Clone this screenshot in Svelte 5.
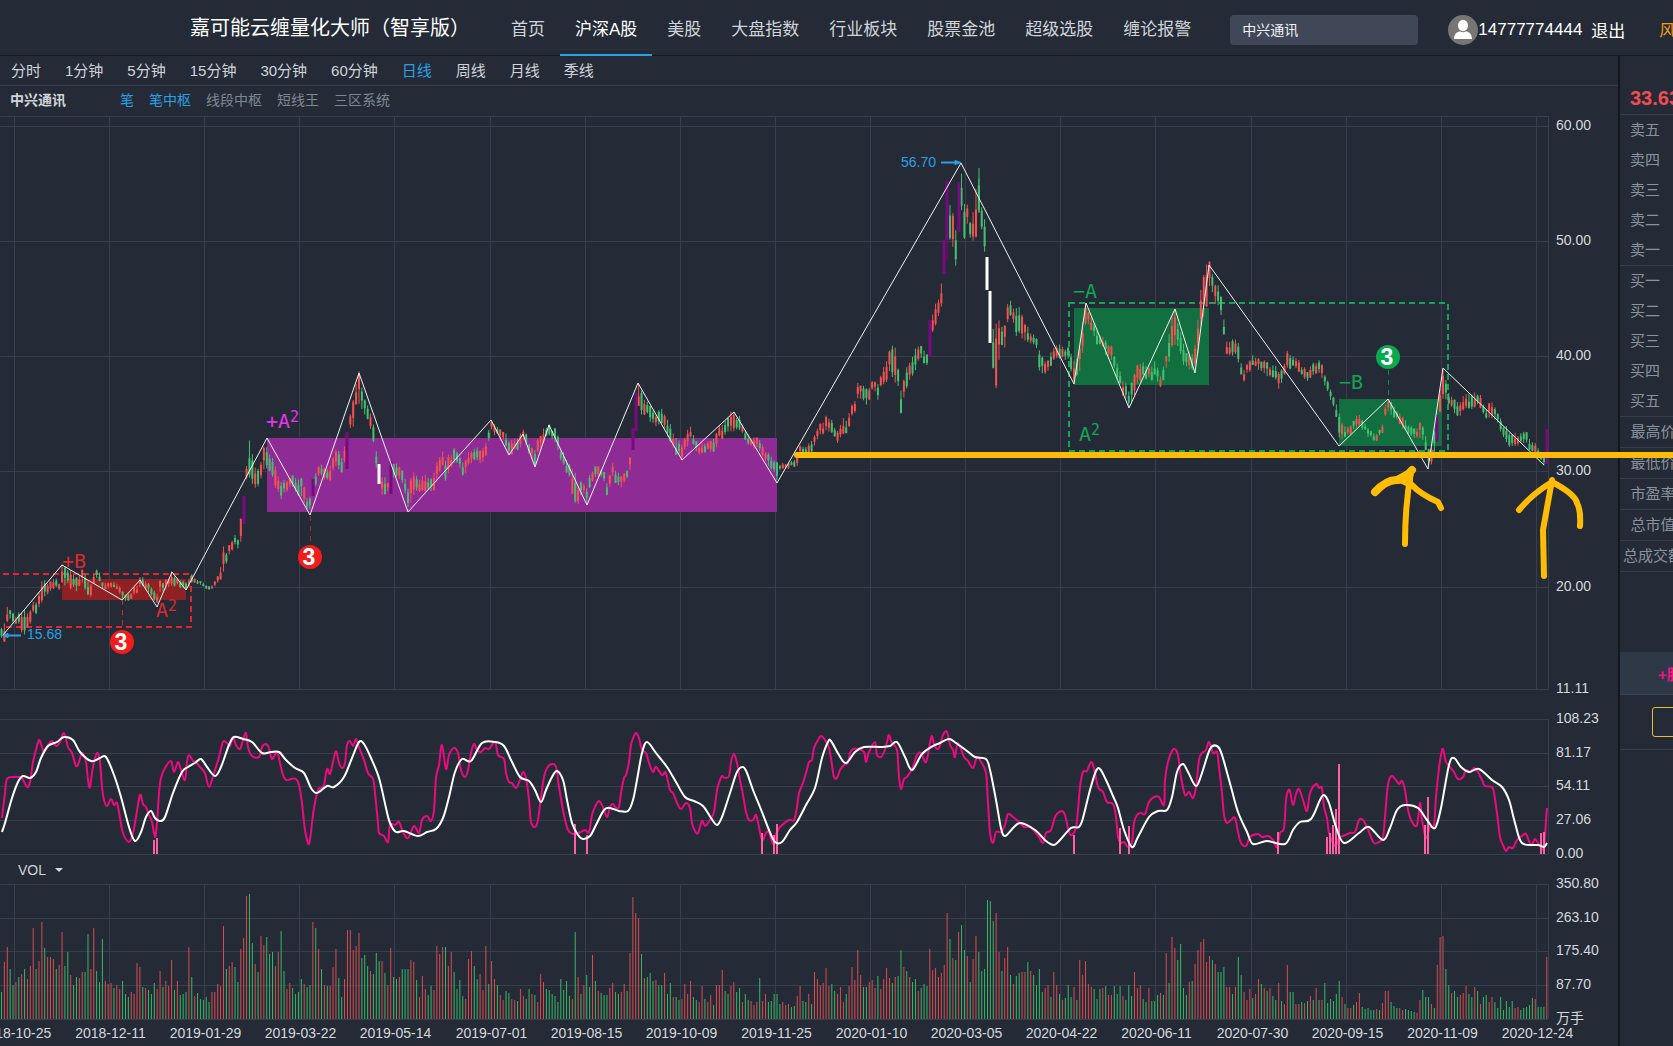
<script>
    const navItems = ['首页', '沪深A股', '美股', '大盘指数', '行业板块', '股票金池', '超级选股', '缠论报警'];
    const periods = ['分时', '1分钟', '5分钟', '15分钟', '30分钟', '60分钟', '日线', '周线', '月线', '季线'];
    const overlays = ['笔', '笔中枢', '线段中枢', '短线王', '三区系统'];
    const sells = ['卖五', '卖四', '卖三', '卖二', '卖一'];
    const buys = ['买一', '买二', '买三', '买四', '买五'];
    const stats = ['最高价', '最低价', '市盈率', '总市值', '总成交额'];

    let activeNav = '沪深A股';
    let activePeriod = '日线';
    let activeOverlays = ['笔', '笔中枢'];
    let keyword = '中兴通讯';
    let indicator = 'VOL';

    const dates = [
        '2018-10-25', '2018-12-11', '2019-01-29', '2019-03-22', '2019-05-14', '2019-07-01',
        '2019-08-15', '2019-10-09', '2019-11-25', '2020-01-10', '2020-03-05', '2020-04-22',
        '2020-06-11', '2020-07-30', '2020-09-15', '2020-11-09', '2020-12-24'
    ].map((label, i) => ({ label, x: 14.5 + Math.round(i * 95.12) }));

    const priceTicks = [['60.00', 126], ['50.00', 241], ['40.00', 356], ['30.00', 471], ['20.00', 587], ['11.11', 689]];
    const oscTicks = [['108.23', 29], ['81.17', 63], ['54.11', 96], ['27.06', 130], ['0.00', 164]];
    const volTicks = [['350.80', 4], ['263.10', 38], ['175.40', 71], ['87.70', 105], ['万手', 139]];

    const STEP = 2.883;

    // one entry per trading day, negative when the day closed down
    const volumes = [
        -27, 57, 72, -50, -34, 37, -42, 45, -50, 40, 53, 91, -50, 58, 97, -71, 62, 62, 60, -50,
        54, 87, -53, -67, 44, -34, -42, 41, 47, -47, -85, 50, 91, -48, -37, -80, 38, 35, 36, -31,
        34, 30, -38, -25, -22, 27, 25, 56, 52, -32, 31, -29, -25, -36, 30, 48, -32, 38, 33, 59,
        -29, 38, -24, -25, -27, 72, -42, 23, -26, -20, -19, -22, -17, 27, 27, 35, 33, 93, -50, 53,
        57, -52, -37, 70, 81, 123, -125, -76, 55, -47, 83, 74, -82, -65, -67, 53, 67, -88, -48, 30,
        36, -31, -25, -27, -40, 35, -32, -34, 97, -91, 70, -50, 34, -33, 33, 52, 70, -41, -22, 40,
        89, 89, 69, 73, 86, -61, -64, -53, 48, -45, -66, -58, 58, -46, 34, 71, -42, -40, 42, -50,
        -50, -50, 59, 57, -39, 22, 43, 30, -24, -33, 29, 73, 65, 72, -72, 53, 67, -47, -30, -39,
        -23, 20, 60, 68, -53, -40, 45, 29, 73, -35, 58, 40, -34, 24, 19, -28, -26, 20, 19, -18,
        30, 23, -20, -30, 25, -24, 17, 45, 37, -30, -29, -25, -23, -17, -40, -29, -38, -23, 20, -87,
        42, -25, 34, -44, -32, 64, -38, 28, -26, -24, -24, 31, 36, -27, -25, 27, 35, -28, 66, 122,
        106, 101, -65, 41, -42, -46, -38, 39, -34, -34, 46, -25, -36, 22, -22, -19, 20, 35, 25, 38,
        -22, -19, 17, 33, -20, 17, 24, -14, 34, 34, 49, -28, -25, 33, 37, -27, -31, 17, -25, -19,
        18, 14, 17, -41, 18, 25, -17, -18, -25, -25, -15, 17, 14, 15, -12, -13, 23, 33, -18, -17,
        25, -15, 47, 40, 34, 36, 51, 33, -35, -28, 25, 32, 17, -25, 33, 52, 39, 69, 44, -32,
        -32, 37, 39, 31, -43, 30, 40, 51, 41, -36, 42, -43, -69, 52, -48, 42, -37, -40, 28, -31,
        -35, -33, 70, 49, 51, 42, 46, 54, 106, -80, 61, -59, 87, -94, -69, 63, -37, 60, 83, -67,
        -48, -50, -119, -118, -98, 106, 67, -48, 61, 72, -44, 35, -43, -46, 47, 47, -57, 48, -44, -34,
        -50, -27, 31, 34, -22, 47, 34, -25, 19, -21, -34, -22, 32, -19, 59, 44, 58, 35, 32, -30,
        -20, -30, 31, -33, 24, 24, -33, -25, -33, 23, -19, -34, -23, 47, 31, 34, -20, -17, 31, -18,
        -18, -24, 26, -24, 66, -36, 82, 71, -59, -75, -31, -24, 37, -38, 55, 69, 77, 80, 57, 63,
        -59, 55, -47, -47, -52, 32, 32, -25, 32, -62, -44, 27, 19, 30, -21, 25, 40, -35, 31, -28,
        31, -23, -19, 36, -18, 15, 54, -27, -27, 15, 15, -17, 16, -18, 23, -19, 31, -19, 19, -36,
        -16, -20, -18, -25, -38, 22, -15, 11, 11, -14, 17, 26, -12, -10, -11, -9, -9, 10, -9, 16,
        28, 28, -17, -13, -11, 11, 9, -10, -9, -8, -7, 6, 19, -29, -22, -22, 15, -11, 54, 82,
        83, -50, -34, 26, -28, -22, 24, 26, 33, -25, -22, 32, -28, 15, -22, -24, 17, 22, -17, -11,
        -22, -9, -18, -12, -18, 11, 12, -9, -11, -12, -14, -21, 20, -12, -12, -12, 62
    ];

    const parse = (text) => text.trim().split(/\s+/).map((p) => p.split(',').map(Number));

    // x, middle of the day's range, length of the range
    const pricePath = parse(`
        0,635,4 4,633,18 7,615,16 11,616,10 15,621,8 19,617,12 24,625,22 30,618,12 33,608,10 38,605,12
        42,590,18 48,588,12 54,583,10 59,586,8 62,575,20 68,575,16 72,580,16 78,584,12 84,576,12 88,590,18
        92,590,14 95,572,8 99,574,8 103,588,8 110,584,6 115,584,6 120,590,8 125,597,8 131,595,8 137,588,10
        142,581,8 148,587,8 154,594,10 157,600,12 160,588,12 167,584,8 172,580,14 178,583,8 184,586,8 188,583,12
        192,578,8 200,583,4 208,588,4 214,586,4 220,575,10 223,562,24 228,553,7 235,538,13 240,545,10 241,528,24
        247,470,12 250,458,46 254,475,20 260,475,14 264,457,22 270,465,16 275,475,18 282,490,17 290,480,12 298,485,14
        305,495,18 309,508,14 313,490,10 318,470,12 325,474,10 331,473,14 335,455,22 340,465,14 344,460,14 350,425,16
        354,410,28 357,392,30 359,385,34 363,400,22 367,412,16 370,418,18 373,430,14 376,455,22 382,488,20 388,485,10
        395,470,16 400,475,16 405,485,18 408,495,26 413,485,22 420,485,16 427,480,14 432,485,14 437,470,20 442,460,16
        446,470,20 453,455,14 458,460,12 464,472,14 470,455,14 478,455,12 484,455,12 488,442,14 491,425,10 496,430,10
        503,436,10 508,445,14 514,447,12 520,440,12 524,435,10 528,445,12 534,458,14 540,440,16 548,430,10 556,438,12
        562,457,14 568,470,12 574,482,30 578,495,16 583,485,10 587,495,18 592,475,14 598,470,10 604,475,8 607,490,10
        612,470,16 618,478,12 623,482,10 627,474,10 630,465,16 639,395,24 643,406,20 650,412,14 655,420,14 660,418,14
        665,420,12 670,432,20 676,445,16 682,455,14 688,435,14 692,434,14 698,448,10 706,447,10 714,445,12 720,430,16
        726,430,14 733,420,18 738,422,14 745,433,10 752,445,10 758,443,12 765,455,12 772,462,14 777,474,18 780,467,5
        786,466,5 792,464,6 797,460,14 800,450,8 806,450,8 812,447,12 818,432,12 825,424,16 832,425,12 836,438,12
        842,427,14 848,425,12 852,410,14 855,404,14 858,388,16 862,395,16 868,395,14 873,382,12 878,390,14 884,376,16
        890,362,24 895,365,30 899,378,20 901,402,20 905,385,20 910,370,20 916,355,18 922,352,12 928,360,12 932,322,18
        938,310,20 942,292,26 949,217,34 953,230,38 956,248,30 961,185,44 964,225,44 967,210,24 971,234,20 975,220,50
        978,192,46 983,225,24 985,235,34 993,350,34 996,355,56 1000,338,26 1004,340,26 1008,308,18 1012,312,14 1016,325,26
        1020,320,24 1025,335,20 1032,338,12 1036,340,12 1040,362,18 1045,366,12 1050,362,12 1055,352,12 1062,352,12 1068,355,14
        1072,363,18 1075,372,18 1080,355,24 1083,335,30 1085,312,24 1090,322,12 1096,335,12 1102,343,12 1110,350,14 1116,365,16
        1122,385,12 1128,397,16 1132,393,20 1136,375,18 1142,370,14 1148,375,14 1155,370,12 1160,382,14 1163,375,14 1168,355,18
        1173,328,46 1178,335,26 1183,355,20 1190,360,14 1194,365,20 1198,335,30 1201,305,40 1205,290,44 1209,275,26 1214,290,20
        1220,300,20 1224,330,20 1226,350,18 1232,345,14 1237,345,16 1241,370,16 1245,375,12 1251,362,12 1258,362,10 1266,368,12
        1272,372,12 1278,378,18 1284,372,12 1288,358,16 1294,362,12 1302,370,10 1308,375,10 1315,366,12 1320,368,12 1325,380,12
        1330,392,12 1335,405,14 1340,432,26 1345,430,10 1352,428,8 1358,418,14 1364,425,8 1370,434,8 1376,438,6 1382,430,8
        1386,408,12 1390,408,12 1396,415,10 1402,420,10 1408,430,10 1416,433,8 1420,428,14 1425,440,14 1428,458,18 1431,455,22
        1434,445,16 1440,400,24 1443,385,28 1448,395,16 1454,405,12 1460,410,12 1467,400,14 1474,400,14 1480,402,12 1486,415,12
        1492,410,14 1500,422,12 1506,435,14 1512,440,12 1520,440,12 1526,438,10 1532,448,12 1538,455,12 1544,460,10 1548,462,8
    `);

    // limit-up and limit-down days
    const marked = [
        [244, 496, 524, 'up'], [313, 479, 496, 'up'], [347, 432, 469, 'up'], [391, 461, 494, 'up'],
        [633, 428, 450, 'up'], [636, 393, 431, 'up'], [930, 320, 357, 'up'], [944, 240, 274, 'up'],
        [947, 181, 240, 'up'], [959, 182, 232, 'up'], [1437, 415, 442, 'up'], [1547, 429, 464, 'up'],
        [379, 464, 484, 'down'], [987, 257, 290, 'down'], [990, 291, 343, 'down']
    ];

    const strokes = '3,635 62,565 122,600 140,580 157,607 172,572 186,590 267,438 310,515 359,373 408,512 491,420 509,455 523,434 535,467 549,425 587,505 638,383 682,460 734,412 777,483 961,163 1074,384 1086,303 1129,408 1175,309 1195,373 1209,265 1339,446 1388,399 1428,469 1443,368 1544,465';

    const fastLine = parse(`
        2,128 5,103 7,89 14,87 18,87 22,88 27,97 30,92 33,72 36,60 39,50 42,57 44,62 48,55 52,51 56,56 60,52 64,43
        68,57 72,63 76,76 79,72 82,63 86,72 88,90 90,97 93,77 97,63 100,72 102,97 104,110 107,116 111,109 114,115 117,113
        120,128 123,143 129,152 133,143 136,127 140,105 143,114 146,117 149,125 152,132 155,147 157,133 159,103 161,88
        165,78 171,71 174,82 178,72 181,80 185,90 187,72 189,65 193,71 196,72 200,77 205,83 209,97 214,83 219,67 223,52
        227,53 230,56 233,47 236,55 240,59 243,50 246,43 248,57 252,66 259,67 262,57 266,54 269,58 272,69 277,62 280,73
        283,85 286,90 291,89 296,89 299,95 302,113 305,140 309,154 312,133 314,118 318,100 321,98 324,95 327,79 330,84
        333,72 336,61 339,73 342,78 345,73 347,55 350,51 353,56 356,49 359,57 364,70 368,83 373,89 375,103 378,133
        379,143 384,146 388,152 390,135 395,135 399,132 403,142 408,148 414,136 419,143 422,130 427,126 431,131 434,120
        436,88 439,75 442,55 446,79 449,65 454,58 458,63 461,80 465,87 468,80 471,63 474,54 477,60 481,62 485,58 489,59
        495,52 498,65 504,69 506,83 509,92 512,93 516,98 520,90 523,82 526,88 529,110 531,132 535,137 538,130 541,107
        544,87 547,78 552,74 556,77 559,97 564,125 568,140 573,144 578,143 581,142 585,140 589,142 592,125 595,117
        599,111 603,117 607,127 610,117 613,114 616,118 619,117 621,103 624,88 626,85 629,72 631,55 634,46 636,43
        639,48 642,60 646,63 649,73 653,82 656,77 662,85 665,82 667,87 670,100 673,103 677,113 681,119 686,113 690,118
        692,133 695,141 698,143 702,131 705,136 710,130 714,122 717,100 720,90 722,86 725,88 729,86 731,72 734,64
        737,73 740,90 743,105 746,122 749,130 753,130 756,125 759,137 761,147 763,150 766,143 769,142 773,154 777,142
        781,136 789,130 794,130 797,117 799,103 803,93 806,83 809,72 812,70 814,58 818,50 821,46 825,50 829,58 832,75
        834,87 837,88 840,80 844,75 848,73 850,63 853,59 858,59 864,62 866,72 869,62 875,52 877,65 881,67 884,62 887,52
        889,45 892,53 897,60 899,87 901,99 904,89 907,87 912,79 917,65 921,63 926,72 930,53 932,46 935,57 939,58 943,45
        947,42 950,55 953,60 955,67 958,53 964,67 968,71 973,78 977,67 981,72 986,83 988,113 990,143 993,153 996,142
        1001,142 1005,135 1008,124 1013,127 1019,132 1024,137 1030,137 1035,142 1039,147 1043,153 1046,143 1051,140
        1055,127 1058,123 1062,121 1065,125 1069,142 1072,145 1076,137 1078,120 1080,97 1083,82 1087,81 1091,72 1094,78
        1098,97 1103,102 1107,112 1113,114 1116,127 1118,147 1121,153 1124,152 1128,157 1132,152 1134,133 1137,125
        1141,123 1145,124 1149,112 1154,107 1159,107 1164,115 1165,90 1168,72 1172,61 1175,59 1178,65 1181,87 1185,105
        1189,102 1193,108 1196,97 1199,70 1202,63 1206,60 1209,52 1213,63 1217,62 1219,77 1222,103 1224,125 1227,133
        1231,130 1235,128 1238,142 1241,153 1246,156 1250,147 1258,144 1262,147 1268,146 1273,150 1277,157 1280,143
        1284,138 1286,110 1288,101 1290,101 1293,115 1296,104 1299,99 1303,110 1307,121 1310,103 1316,94 1319,98
        1322,98 1324,117 1327,128 1329,143 1333,153 1336,156 1339,147 1343,146 1350,143 1355,142 1359,130 1363,130
        1367,137 1371,147 1374,153 1379,152 1383,147 1385,127 1387,103 1389,90 1392,86 1396,90 1399,94 1402,91 1405,100
        1408,120 1412,132 1417,135 1420,113 1422,130 1426,148 1430,137 1434,135 1436,107 1439,78 1441,65 1443,59
        1446,72 1450,77 1454,82 1458,89 1463,87 1466,80 1470,82 1474,78 1478,82 1482,90 1485,96 1492,97 1494,103
        1497,123 1500,147 1503,155 1506,161 1509,157 1513,158 1517,150 1522,146 1526,144 1531,155 1535,149 1540,156
        1544,158 1546,130 1547,118
    `);

    const slowLine = parse(`
        2,142 5,133 12,108 18,92 23,86 30,88 36,82 41,68 48,56 57,52 64,47 73,50 80,62 91,71 100,68 106,67 114,85
        121,107 129,137 135,151 141,142 146,127 151,121 155,128 160,131 165,127 173,103 182,82 188,77 195,73 201,69
        207,77 215,86 221,77 229,55 234,47 243,49 252,52 262,63 271,62 279,62 286,70 295,78 304,83 311,98 317,103
        327,96 334,97 344,87 352,68 359,52 364,54 371,68 379,88 386,118 390,133 396,142 404,141 418,146 427,142 436,139
        443,128 449,107 455,82 462,69 471,71 482,53 495,52 504,56 512,72 520,87 529,91 535,100 541,112 546,100 552,87
        557,81 563,90 567,110 572,133 578,145 583,149 590,146 596,135 604,120 610,118 619,121 628,121 633,110 637,90
        642,63 647,52 656,63 667,77 676,92 685,107 694,111 703,116 711,128 717,135 722,127 730,103 737,82 743,77
        747,83 753,100 760,117 769,140 775,152 782,152 790,140 797,132 806,115 815,98 822,68 828,52 831,51 839,65
        846,73 855,62 864,57 881,57 890,56 897,52 905,67 912,80 922,64 933,56 940,53 949,49 956,53 967,61 975,67
        986,69 990,80 996,110 1001,138 1005,146 1014,137 1021,133 1035,140 1046,151 1054,155 1060,150 1071,138
        1079,137 1083,128 1090,100 1096,81 1100,79 1106,90 1113,106 1118,118 1124,140 1132,157 1138,147 1149,127
        1158,121 1167,120 1172,107 1177,82 1183,74 1188,82 1196,96 1202,83 1210,59 1217,56 1222,65 1231,97 1238,122
        1247,142 1253,154 1267,151 1285,154 1293,140 1300,132 1311,129 1320,110 1324,105 1329,113 1336,137 1344,153
        1359,143 1369,137 1383,150 1390,138 1397,120 1405,115 1418,118 1427,130 1435,138 1441,118 1449,75 1454,68
        1461,77 1469,82 1479,79 1492,90 1502,97 1509,110 1515,133 1522,153 1538,155 1544,157 1547,153
    `);

    const spikes = parse(`
        154,150 157,148 575,134 587,145 762,143 774,145 777,134 1074,145 1120,138 1129,136 1278,142 1327,147
        1330,143 1333,135 1336,119 1339,74 1425,135 1428,107 1541,143 1544,142
    `);

    const badges = [
        { x: 122, y: 642, from: 600, to: 630, color: '#f21c1c', stem: '#c92a2a' },
        { x: 310, y: 557, from: 516, to: 545, color: '#f21c1c', stem: '#a52a30' },
        { x: 1388, y: 357, from: 370, to: 399, color: '#0aa84f', stem: '#128a4a' }
    ];

    const tags = [
        { text: '+B', x: 62, y: 568, color: '#dc2a2e' },
        { text: 'A', power: 2, x: 156, y: 617, color: '#dc2a2e' },
        { text: '+A', power: 2, x: 266, y: 428, color: '#ee33ee' },
        { text: '−A', x: 1073, y: 298, color: '#0fa656' },
        { text: 'A', power: 2, x: 1079, y: 441, color: '#0fa656' },
        { text: '−B', x: 1339, y: 389, color: '#0fa656' }
    ];

    function pathAt(x) {
        let i = 1;
        while (i < pricePath.length - 1 && pricePath[i][0] < x) i++;
        const [x0, m0, l0] = pricePath[i - 1];
        const [x1, m1, l1] = pricePath[i];
        const t = Math.min(1, Math.max(0, (x - x0) / (x1 - x0)));
        return [m0 + (m1 - m0) * t, l0 + (l1 - l0) * t];
    }

    const noise = (i) => {
        const v = Math.sin(i * 127.1 + 11.7) * 43758.5453;
        return v - Math.floor(v);
    };

    const candles = volumes
        .map((v, i) => {
            const x = 1.5 + i * STEP;
            const [mid, len] = pathAt(x);
            const range = len * (0.7 + noise(i) * 0.5);
            const center = mid + (noise(i + 900) - 0.5) * Math.min(len, 16) * 0.4;
            const top = center - range / 2;
            const body = range * (0.4 + noise(i + 300) * 0.35);
            return { x, top, bottom: top + range, bodyTop: top + (range - body) * noise(i + 600), body, down: v < 0 };
        })
        .filter((c) => !marked.some((m) => Math.abs(m[0] - c.x) < 1.5));

    function smooth(points) {
        let d = `M${points[0][0]} ${points[0][1]}`;
        for (let i = 0; i < points.length - 1; i++) {
            const p0 = points[i - 1] || points[i];
            const p1 = points[i];
            const p2 = points[i + 1];
            const p3 = points[i + 2] || p2;
            const c1x = p1[0] + (p2[0] - p0[0]) / 6;
            const c1y = p1[1] + (p2[1] - p0[1]) / 6;
            const c2x = p2[0] - (p3[0] - p1[0]) / 6;
            const c2y = p2[1] - (p3[1] - p1[1]) / 6;
            d += `C${c1x.toFixed(1)} ${c1y.toFixed(1)} ${c2x.toFixed(1)} ${c2y.toFixed(1)} ${p2[0]} ${p2[1]}`;
        }
        return d;
    }

    function toggleOverlay(name) {
        activeOverlays = activeOverlays.includes(name)
            ? activeOverlays.filter((o) => o !== name)
            : [...activeOverlays, name];
    }
</script>

<div class="page">
    <header class="header">
        <h1>嘉可能云缠量化大师（智享版）</h1>
        <nav class="nav">
            {#each navItems as item}
                <a href="#top" class:active={item === activeNav} on:click|preventDefault={() => (activeNav = item)}>{item}</a>
            {/each}
        </nav>
        <input class="search" type="text" aria-label="股票搜索" bind:value={keyword} />
        <div class="user">
            <svg class="avatar" viewBox="0 0 30 30" width="30" height="30" aria-hidden="true">
                <circle cx="15" cy="15" r="15" fill="#777675" />
                <ellipse cx="15" cy="10.5" rx="5" ry="5.7" fill="#fff" />
                <path d="M6 24c0-4.600 2.500-7 6-7.800 1.800 1.400 4.200 1.400 6 0 3.500.8 6 3.200 6 7.800z" fill="#fff" />
            </svg>
            <span>14777774444</span>
            <a class="logout" href="#logout">退出</a>
        </div>
        <a class="risk" href="#risk">风</a>
    </header>

    <main class="workspace">
        <section class="charts">
            <div class="periods">
                {#each periods as period}
                    <button class:active={period === activePeriod} on:click={() => (activePeriod = period)}>{period}</button>
                {/each}
            </div>
            <div class="overlays">
                <strong>中兴通讯</strong>
                {#each overlays as name}
                    <button class:active={activeOverlays.includes(name)} on:click={() => toggleOverlay(name)}>{name}</button>
                {/each}
            </div>

            <svg class="chart" viewBox="0 116 1618 574">
                <g class="grid">
                    <path d="M0 116.500H1548.500V689.500H0" />
                    {#each priceTicks as [, y]}
                        <path d="M0 {y + 0.5}H1548" />
                    {/each}
                    {#each dates as { x }}
                        <path d="M{x} 116V689" />
                    {/each}
                </g>
                <rect x="62" y="579" width="124" height="21" fill="#8f2125" />
                <rect x="267" y="438" width="510" height="74" fill="#8f2b95" />
                <rect x="1074" y="308" width="135" height="77" fill="#127040" />
                <rect x="1339" y="399" width="103" height="47" fill="#127040" />
                <path class="frame" d="M3 574H191V627H3" stroke="#e8242a" />
                <path class="frame" d="M1069 303H1448V451H1069Z" stroke="#0fa656" />

                {#each candles as c}
                    <g class:down={c.down} class="candle">
                        <path d="M{c.x} {c.top}V{c.bottom}" stroke-width="1" />
                        <path d="M{c.x} {c.bodyTop}v{c.body}" stroke-width="2" />
                    </g>
                {/each}
                {#each marked as [x, top, bottom, kind]}
                    <path class="marked {kind}" d="M{x} {top}V{bottom}" />
                {/each}
                <path d="M947 181V260" stroke="#80007f" />
                <path d="M979 168V213" stroke="#3fc46d" />
                <polyline points={strokes} fill="none" stroke="#f2f2f5" stroke-width="1" />

                {#each badges as b}
                    <path d="M{b.x + 0.5} {b.from}V{b.to}" stroke={b.stem} stroke-dasharray="5 5" />
                    <circle cx={b.x} cy={b.y} r="12" fill={b.color} />
                    <text class="badge" x={b.x - 1} y={b.y + 8}>3</text>
                {/each}
                {#each tags as t}
                    <text class="tag" x={t.x} y={t.y} fill={t.color}>{t.text}{#if t.power}<tspan class="power" dy="-6">{t.power}</tspan>{/if}</text>
                {/each}
                <g fill="#2d9fe3" stroke="#2d9fe3">
                    <path d="M4 635.500H21M941 162.500H958" stroke-width="2" />
                    <path d="M2 635.500l6-2v4zM961 162.500l-6-2v4z" />
                </g>
                <text class="extreme" x="27" y="639">15.68</text>
                <text class="extreme" x="901" y="167">56.70</text>
                {#each priceTicks as [label, y]}
                    <text class="tick" x="1556" y={y + 4}>{label}</text>
                {/each}
            </svg>

            <svg class="chart" viewBox="0 0 1618 170">
                <g class="grid">
                    {#each oscTicks as [, y]}
                        <path d="M0 {y + 0.5}H1548" />
                    {/each}
                    <path d="M1548.500 29V164" />
                </g>
                <path class="fast" d={smooth(fastLine)} />
                {#each spikes as [x, y]}
                    <path class="spike" d="M{x} {y}V164" />
                {/each}
                <path class="slow" d={smooth(slowLine)} />
                {#each oscTicks as [label, y]}
                    <text class="tick" x="1556" y={y + 4}>{label}</text>
                {/each}
            </svg>

            <div class="indicator">
                <select aria-label="指标" bind:value={indicator}>
                    <option>VOL</option>
                </select>
                <svg viewBox="0 0 8 4" width="8" height="4" aria-hidden="true"><path d="M0 0h8L4 4z" fill="#d5d9df" /></svg>
            </div>

            <svg class="chart" viewBox="0 0 1618 166">
                <g class="grid">
                    {#each volTicks as [, y]}
                        <path d="M0 {y + 0.5}H1548" />
                    {/each}
                    {#each dates as { x }}
                        <path d="M{x} 4V139" />
                    {/each}
                    <path d="M1548.500 4V139" />
                </g>
                {#each volumes as v, i}
                    <path class="volume" class:down={v < 0} d="M{1.5 + i * STEP} 139V{139 - Math.abs(v)}" />
                {/each}
                {#each volTicks as [label, y]}
                    <text class="tick" x="1556" y={y + 4}>{label}</text>
                {/each}
                {#each dates as { label, x }}
                    <text class="tick date" x={x + 1} y="158">{label}</text>
                {/each}
            </svg>
        </section>

        <aside class="quote">
            <strong class="price">33.63</strong>
            <ul class="book">
                {#each sells as row}<li>{row}</li>{/each}
            </ul>
            <ul class="book">
                {#each buys as row}<li>{row}</li>{/each}
            </ul>
            <ul class="stats">
                {#each stats as row}<li>{row}</li>{/each}
            </ul>
            <button class="add">+股</button>
            <div class="action">
                <button aria-label="操作"></button>
            </div>
        </aside>

        <!-- hand-drawn marks lie over both the chart and the quote panel -->
        <svg class="marks" viewBox="0 56 1673 990" aria-hidden="true">
            <path d="M797 455H1673" stroke-width="6" />
            <path d="M1411 472Q1405 505 1405 544M1412 485Q1420 494 1438 502L1441 508" stroke-width="6" />
            <path d="M1375 492Q1387 479 1398 480Q1407 476 1412 470" stroke-width="8" />
            <path d="M1396 479L1411 471L1410 485Z" stroke-width="5" fill="#ffbc04" />
            <path d="M1544 576L1543 530L1552 480M1519 510Q1532 494 1552 482Q1575 494 1577 503Q1581 510 1580 526" stroke-width="6" />
        </svg>
    </main>
</div>

<style>
    :global(body) {
        background: #242b36;
        overflow: hidden;
    }

    .page {
        min-height: 100vh;
        display: flex;
        flex-direction: column;
        overflow: hidden;
        color: #d0d4da;
        font-family: "Liberation Sans", "Noto Sans CJK SC", sans-serif;
        font-size: 14px;
    }

    button,
    input,
    select {
        font: inherit;
        color: inherit;
        background: none;
        border: 0;
        padding: 0;
        margin: 0;
    }

    button {
        cursor: pointer;
        white-space: nowrap;
    }

    a {
        color: inherit;
        text-decoration: none;
    }

    ul {
        list-style: none;
        margin: 0;
        padding: 0;
    }

    .header {
        display: flex;
        align-items: center;
        height: 55px;
        padding-left: 190px;
        border-bottom: 1px solid #141920;
        background: linear-gradient(#242b36 49px, #2b323d 49px, #2b323d 50px, #242b36 50px);
        font-size: 17px;
        white-space: nowrap;
    }

    h1 {
        margin: 0 26px 2px 0;
        color: #fff;
        font-size: 20px;
        font-weight: 400;
    }

    .nav {
        display: flex;
        align-self: flex-start;
    }

    .nav a {
        height: 54px;
        padding: 0 15px;
        line-height: 60px;
        border-bottom: 2px solid transparent;
    }

    .nav a.active {
        color: #fff;
        border-color: #2d9fe8;
    }

    .search {
        width: 188px;
        height: 30px;
        margin-left: 24px;
        padding: 0 12px 2px;
        box-sizing: border-box;
        border-radius: 4px;
        background: #404857;
        color: #f0f2f5;
        font-size: 14px;
        margin-top: 4px;
    }

    .user {
        display: flex;
        align-items: center;
        margin-left: 30px;
        margin-top: 4px;
        color: #fff;
    }

    .logout {
        margin-left: 9px;
    }

    .risk {
        margin-left: 34px;
        margin-top: 3px;
        color: #f59a1b;
        font-size: 16px;
    }

    .workspace {
        position: relative;
        display: flex;
        flex: 1;
    }

    .charts {
        flex: 1;
        min-width: 0;
        overflow: hidden;
    }

    .periods {
        display: flex;
        gap: 24px;
        height: 27px;
        padding: 0 0 2px 11px;
        border-bottom: 1px solid #363e4b;
        font-size: 15px;
    }

    .overlays {
        display: flex;
        align-items: center;
        gap: 15px;
        height: 26px;
        padding: 0 0 4px 10px;
        color: #7f8794;
    }

    .overlays strong {
        margin-right: 39px;
        color: #d0d4da;
    }

    .periods .active,
    .overlays .active {
        color: #2d9fe3;
    }

    .chart {
        display: block;
        width: 100%;
        overflow: visible;
    }

    .grid path {
        fill: none;
        stroke: #363f4b;
    }

    .frame {
        fill: none;
        stroke-width: 2;
        stroke-dasharray: 6 4;
    }

    .candle path {
        stroke: #f4524f;
    }

    .candle.down path {
        stroke: #46c070;
    }

    .marked {
        stroke-width: 3;
    }

    .marked.up {
        stroke: #7b0a80;
    }

    .marked.down {
        stroke: #fff;
    }

    .badge {
        fill: #fff;
        font-size: 23px;
        font-weight: 700;
        text-anchor: middle;
    }

    .tag {
        font-family: "DejaVu Sans Mono", monospace;
        font-size: 20px;
    }

    .power {
        font-size: 15px;
    }

    .extreme {
        fill: #2d9fe3;
        font-size: 14px;
    }

    .tick {
        fill: #d4d8de;
        font-size: 14px;
    }

    .date {
        text-anchor: middle;
    }

    .fast,
    .slow {
        fill: none;
        stroke-width: 2;
        stroke-linejoin: round;
    }

    .fast {
        stroke: #ee0a7e;
    }

    .slow {
        stroke: #fff;
    }

    .spike {
        stroke: #ff5fa2;
        stroke-width: 2;
    }

    .volume {
        stroke: #d94c50;
    }

    .volume.down {
        stroke: #38b866;
    }

    .indicator {
        display: grid;
        justify-content: start;
        align-items: center;
        height: 20px;
    }

    .indicator select,
    .indicator svg {
        grid-area: 1 / 1;
    }

    .indicator select {
        appearance: none;
        width: 66px;
        height: 20px;
        padding-left: 18px;
    }

    .indicator svg {
        margin-right: 3px;
        justify-self: end;
        pointer-events: none;
    }

    .quote {
        width: 53px;
        border-left: 2px solid #12171e;
        overflow: hidden;
        color: #8a929e;
        font-size: 15px;
        white-space: nowrap;
    }

    .price {
        display: block;
        height: 32px;
        padding: 26px 0 0 10px;
        border-bottom: 1px solid #363e4b;
        color: #f04b52;
        font-size: 20px;
        line-height: 32px;
    }

    .book {
        border-bottom: 1px solid #363e4b;
    }

    .book li {
        height: 30px;
        line-height: 30px;
        padding-left: 10px;
    }

    .stats li {
        width: 66px;
        height: 30px;
        line-height: 30px;
        text-align: center;
        border-bottom: 1px solid #363e4b;
    }

    .add {
        display: block;
        width: 100%;
        height: 43px;
        margin-top: 80px;
        padding-left: 38px;
        background: #2e3846;
        border-bottom: 1px solid #3a4452;
        color: #f5128a;
        font-weight: 700;
        text-align: left;
    }

    .action {
        padding: 12px 0 12px 32px;
        border-bottom: 1px solid #363e4b;
    }

    .action button {
        display: block;
        width: 90px;
        height: 30px;
        border: 1px solid #e5bf3a;
        border-radius: 3px;
    }

    .marks {
        position: absolute;
        top: 0;
        left: 0;
        width: 100%;
        pointer-events: none;
        fill: none;
        stroke: #ffbc04;
        stroke-linecap: round;
        stroke-linejoin: round;
    }
</style>
